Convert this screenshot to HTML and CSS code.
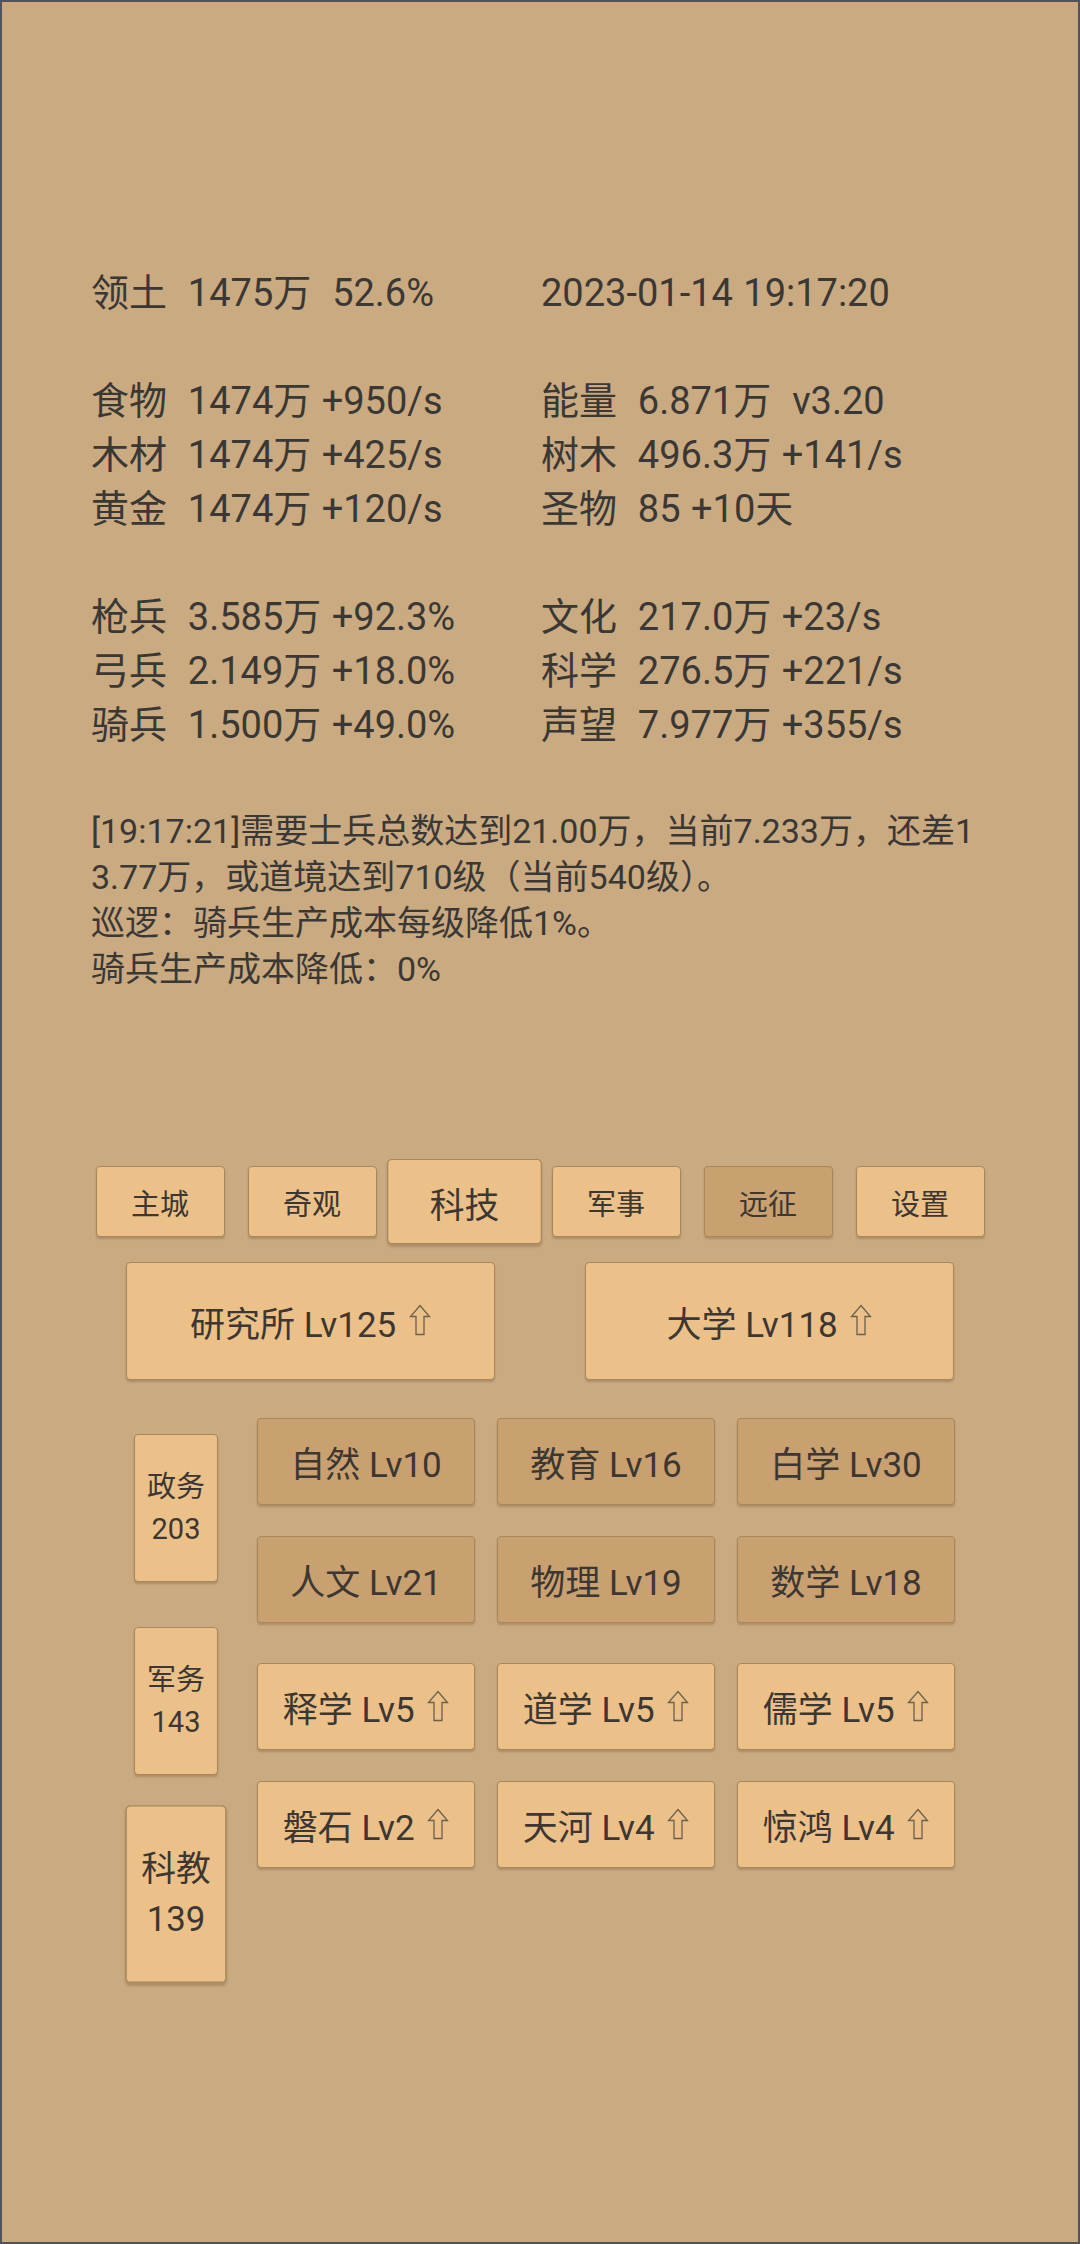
FILE: index.html
```html
<!DOCTYPE html>
<html lang="zh">
<head>
<meta charset="utf-8">
<title>科技</title>
<link rel="stylesheet" href="styles.css">
</head>
<body>
<div class="screen">
  <section class="stats">
    <div class="cell">领土  1475万  52.6%</div>
    <div class="cell">2023-01-14 19:17:20</div>
    <div class="cell blank"></div>
    <div class="cell blank"></div>
    <div class="cell">食物  1474万 +950/s</div>
    <div class="cell">能量  6.871万  v3.20</div>
    <div class="cell">木材  1474万 +425/s</div>
    <div class="cell">树木  496.3万 +141/s</div>
    <div class="cell">黄金  1474万 +120/s</div>
    <div class="cell">圣物  85 +10天</div>
    <div class="cell blank"></div>
    <div class="cell blank"></div>
    <div class="cell">枪兵  3.585万 +92.3%</div>
    <div class="cell">文化  217.0万 +23/s</div>
    <div class="cell">弓兵  2.149万 +18.0%</div>
    <div class="cell">科学  276.5万 +221/s</div>
    <div class="cell">骑兵  1.500万 +49.0%</div>
    <div class="cell">声望  7.977万 +355/s</div>
  </section>

  <section class="log">
    <div>[19:17:21]需要士兵总数达到21.00万，当前7.233万，还差1</div>
    <div>3.77万，或道境达到710级（当前540级）。</div>
    <div>巡逻：骑兵生产成本每级降低1%。</div>
    <div>骑兵生产成本降低：0%</div>
  </section>

  <nav class="tabs">
    <div class="btn tab">主城</div>
    <div class="btn tab">奇观</div>
    <div class="btn tab active">科技</div>
    <div class="btn tab">军事</div>
    <div class="btn tab dark">远征</div>
    <div class="btn tab">设置</div>
  </nav>

  <section class="buildings">
    <div class="btn building">研究所 Lv125 <svg class="up" viewBox="0 0 22 32"><path d="M11 1.5 L20.5 12.5 L15 12.5 L15 30.5 L7 30.5 L7 12.5 L1.5 12.5 Z"/></svg></div>
    <div class="btn building">大学 Lv118 <svg class="up" viewBox="0 0 22 32"><path d="M11 1.5 L20.5 12.5 L15 12.5 L15 30.5 L7 30.5 L7 12.5 L1.5 12.5 Z"/></svg></div>
  </section>

  <section class="tech">
    <div class="side">
      <div class="btn sidebtn">政务<br>203</div>
      <div class="btn sidebtn">军务<br>143</div>
      <div class="btn sidebtn active">科教<br>139</div>
    </div>
    <div class="panel">
      <div class="grid">
        <div class="btn tile dark">自然 Lv10</div>
        <div class="btn tile dark">教育 Lv16</div>
        <div class="btn tile dark">白学 Lv30</div>
        <div class="btn tile dark">人文 Lv21</div>
        <div class="btn tile dark">物理 Lv19</div>
        <div class="btn tile dark">数学 Lv18</div>
      </div>
      <div class="grid">
        <div class="btn tile">释学 Lv5 <svg class="up" viewBox="0 0 22 32"><path d="M11 1.5 L20.5 12.5 L15 12.5 L15 30.5 L7 30.5 L7 12.5 L1.5 12.5 Z"/></svg></div>
        <div class="btn tile">道学 Lv5 <svg class="up" viewBox="0 0 22 32"><path d="M11 1.5 L20.5 12.5 L15 12.5 L15 30.5 L7 30.5 L7 12.5 L1.5 12.5 Z"/></svg></div>
        <div class="btn tile">儒学 Lv5 <svg class="up" viewBox="0 0 22 32"><path d="M11 1.5 L20.5 12.5 L15 12.5 L15 30.5 L7 30.5 L7 12.5 L1.5 12.5 Z"/></svg></div>
        <div class="btn tile">磐石 Lv2 <svg class="up" viewBox="0 0 22 32"><path d="M11 1.5 L20.5 12.5 L15 12.5 L15 30.5 L7 30.5 L7 12.5 L1.5 12.5 Z"/></svg></div>
        <div class="btn tile">天河 Lv4 <svg class="up" viewBox="0 0 22 32"><path d="M11 1.5 L20.5 12.5 L15 12.5 L15 30.5 L7 30.5 L7 12.5 L1.5 12.5 Z"/></svg></div>
        <div class="btn tile">惊鸿 Lv4 <svg class="up" viewBox="0 0 22 32"><path d="M11 1.5 L20.5 12.5 L15 12.5 L15 30.5 L7 30.5 L7 12.5 L1.5 12.5 Z"/></svg></div>
      </div>
    </div>
  </section>
</div>
</body>
</html>
```

FILE: styles.css
```css
html, body {
  margin: 0;
  padding: 0;
  background: #caaa81;
}

.screen {
  box-sizing: border-box;
  width: 1080px;
  height: 2244px;
  border: 2px solid #50545a;
  box-shadow: inset 0 2px 0 #d8a47c;
  background: #caaa81;
  color: #3a3835;
  font-family: Roboto, "Noto Sans CJK SC", sans-serif;
  padding-top: 264px;
  overflow: hidden;
}

.stats {
  display: grid;
  grid-template-columns: 450px 450px;
  grid-auto-rows: 54px;
  padding-left: 89px;
  font-size: 38px;
  line-height: 54px;
}

.cell {
  white-space: pre;
  word-spacing: 1px;
}

.log {
  margin-top: 56px;
  padding-left: 89px;
  font-size: 34px;
  line-height: 46px;
  white-space: nowrap;
}

.btn {
  box-sizing: border-box;
  display: flex;
  align-items: center;
  justify-content: center;
  background: #ebc189;
  border: 1.5px solid #a8875d;
  border-radius: 4px;
  box-shadow: 0 2px 2px rgba(90, 60, 30, 0.25);
  color: #3c3732;
  text-align: center;
}

.btn.dark {
  background: #c9a06f;
}

.tabs {
  display: flex;
  justify-content: center;
  gap: 23px;
  margin-top: 174px;
}

.tab {
  width: 129px;
  height: 71px;
  font-size: 29px;
}

.tab.active,
.sidebtn.active {
  transform: scale(1.2);
}

.buildings {
  display: flex;
  justify-content: center;
  gap: 90px;
  margin-top: 25px;
}

.building {
  width: 369px;
  height: 118px;
  font-size: 35px;
  white-space: pre;
}

.up {
  width: 22px;
  height: 32px;
  margin-left: 4px;
  margin-top: -2px;
}

.up path {
  fill: none;
  stroke: #6a604e;
  stroke-width: 1.3;
  stroke-linejoin: miter;
}

.tech {
  display: flex;
  align-items: flex-start;
  gap: 39px;
  margin-top: 38px;
  padding-left: 132px;
}

.side {
  display: flex;
  flex-direction: column;
  gap: 45px;
  margin-top: 16px;
  width: 84px;
}

.sidebtn {
  width: 84px;
  height: 148px;
  font-size: 29px;
  line-height: 42px;
}

.panel {
  display: flex;
  flex-direction: column;
  gap: 40px;
}

.grid {
  display: grid;
  grid-template-columns: repeat(3, 218px);
  grid-auto-rows: 87px;
  column-gap: 22px;
  row-gap: 31px;
}

.tile {
  font-size: 35px;
  white-space: pre;
}
```
